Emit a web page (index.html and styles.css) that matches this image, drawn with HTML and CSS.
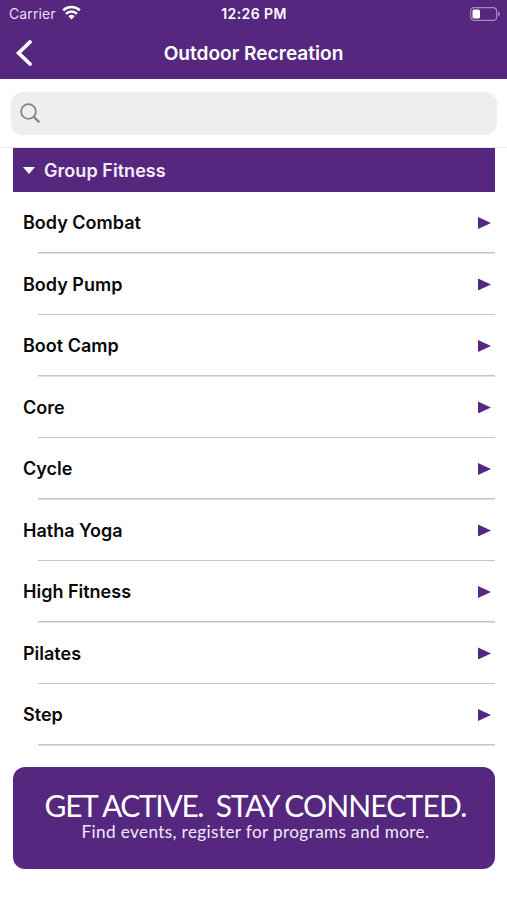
FILE: index.html
```html
<!DOCTYPE html>
<html lang="en">
<head>
<meta charset="utf-8">
<title>Outdoor Recreation</title>
<link rel="stylesheet" href="styles.css">
</head>
<body>
<header class="top">
  <div class="status">
    <div class="carrier"><span class="carrier-name">Carrier</span>
      <svg class="wifi" width="19" height="15" viewBox="0 0 19 15" fill="none" stroke="#fff" stroke-width="2.6"><path d="M1.2 5.4a12 12 0 0 1 16.6 0M4 8.8a7.8 7.8 0 0 1 11 0"/><path d="M6.4 11.2a4.6 4.6 0 0 1 6.2 0L9.5 14.4Z" fill="#fff" stroke="none"/></svg>
    </div>
    <div class="time">12:26 PM</div>
    <svg class="battery" width="32" height="16" viewBox="0 0 32 16"><rect x="1.6" y="1.6" width="26" height="12.8" rx="3.5" fill="none" stroke="#a58abf" stroke-width="1.2"/><rect x="3.5" y="3.4" width="7.5" height="9.2" rx="1.5" fill="#fff"/><path d="M29 5.5c2.4 1 2.4 4 0 5Z" fill="#a58abf"/></svg>
  </div>
  <div class="nav">
    <svg class="back" width="18" height="28" viewBox="0 0 18 28" fill="none" stroke="#fff" stroke-width="3.7" stroke-linecap="round"><path d="M16 3 4.6 14 16 25"/></svg>
    <h1>Outdoor Recreation</h1>
    <span></span>
  </div>
</header>
<div class="search-bar">
  <div class="search">
    <svg width="22" height="22" viewBox="0 0 22 22" fill="none" stroke="#858585" stroke-width="1.8"><circle cx="8.5" cy="8.5" r="7.4"/><path d="m13.7 13.7 5.7 5.7" stroke-width="2.3"/></svg>
  </div>
</div>
<main>
  <h2><svg width="12" height="7" viewBox="0 0 12 7" fill="#fff"><path d="M0 0h12L6 7Z"/></svg><span>Group Fitness</span></h2>
  <ul>
    <li><span>Body Combat</span><i></i></li>
    <li><span>Body Pump</span><i></i></li>
    <li><span>Boot Camp</span><i></i></li>
    <li><span>Core</span><i></i></li>
    <li><span>Cycle</span><i></i></li>
    <li><span>Hatha Yoga</span><i></i></li>
    <li><span>High Fitness</span><i></i></li>
    <li><span>Pilates</span><i></i></li>
    <li><span>Step</span><i></i></li>
  </ul>
  <div class="banner">
    <div class="headline">GET ACTIVE.&nbsp; STAY <span class="wide">CONNECTED.</span></div>
    <div class="tagline">Find events, register for programs and more.</div>
  </div>
</main>
</body>
</html>
```
FILE: styles.css
```css
* { box-sizing: border-box; }
body {
  margin: 0;
  background: #fff;
  color: #0a0a0a;
  font-family: Inter, "Liberation Sans", sans-serif;
  white-space: nowrap;
}
svg { display: block; flex: none; }
h1, h2, ul { margin: 0; padding: 0; }
.top {
  height: 79px;
  background: #56277f;
  color: #fff;
}
.status {
  display: grid;
  grid-template-columns: 1fr auto 1fr;
  height: 27px;
  padding: 0 6px 0 7px;
  align-items: center;
}
.carrier {
  display: flex;
  align-items: center;
  gap: 6px;
  padding-left: 2px;
  color: #eadff2;
  font-size: 14px;
  letter-spacing: 0.1px;
}
.wifi { margin-top: -2px; }
.time { font-size: 14px; font-weight: 600; letter-spacing: 0.4px; }
.battery { justify-self: end; }
.nav {
  display: grid;
  grid-template-columns: 1fr auto 1fr;
  height: 52px;
  padding: 0 14px;
  align-items: center;
}
h1 { font-size: 19.1px; font-weight: 600; line-height: 24px; }
.search-bar {
  height: 69px;
  padding: 13px 10px 0 11px;
  border-bottom: 1px solid #eae8ee;
}
.search {
  display: flex;
  align-items: center;
  height: 43px;
  padding-left: 9px;
  border-radius: 12px;
  background: #eee;
}
main { padding: 0 12px 0 13px; }
h2 {
  display: flex;
  align-items: center;
  gap: 9px;
  height: 44px;
  padding-left: 10px;
  background: #56277f;
  color: #f6edfb;
  font-size: 18px;
  font-weight: 600;
  letter-spacing: 0.05px;
}
ul { list-style: none; }
li {
  display: flex;
  align-items: center;
  justify-content: space-between;
  height: 61.5px;
  padding: 0.4px 4px 0 10px;
  background: linear-gradient(#c6bfd6, #c6bfd6) 25px 100% / 100% 1.5px no-repeat;
  font-size: 18px;
  font-weight: 600;
}
i {
  width: 13px;
  height: 12px;
  background: #56277f;
  clip-path: polygon(0 0, 100% 50%, 0 100%);
}
.banner {
  height: 102px;
  margin-top: 21.5px;
  padding: 21px 0 0 3px;
  border-radius: 12px;
  background: #56277f;
  color: #fff;
  font-family: Lato, "Liberation Sans", sans-serif;
  text-align: center;
}
.headline { font-size: 30px; line-height: 34px; letter-spacing: -1.35px; }
.wide { letter-spacing: -0.85px; }
.tagline { font-size: 17.2px; line-height: 19px; letter-spacing: 0.36px; color: #f2e9f8; }
```
